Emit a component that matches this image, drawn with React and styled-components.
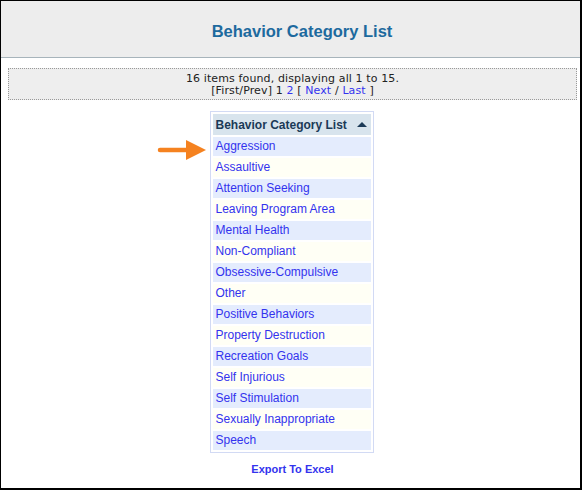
import React from 'react'
import styled, { createGlobalStyle } from 'styled-components'

const categories = [
  'Aggression',
  'Assaultive',
  'Attention Seeking',
  'Leaving Program Area',
  'Mental Health',
  'Non-Compliant',
  'Obsessive-Compulsive',
  'Other',
  'Positive Behaviors',
  'Property Destruction',
  'Recreation Goals',
  'Self Injurious',
  'Self Stimulation',
  'Sexually Inappropriate',
  'Speech',
]

const Global = createGlobalStyle`
  html, body { margin: 0; padding: 0; background: #fff; }
  body { font-family: "Liberation Sans", Arial, sans-serif; }
`

const Frame = styled.div`
  width: 582px;
  height: 490px;
  box-sizing: border-box;
  border-style: solid;
  border-color: #000;
  border-width: 1px 2px 2px 1px;
  display: flex;
  flex-direction: column;
  background: #fff;
`

const Header = styled.div`
  height: 57px;
  box-sizing: border-box;
  background: #ededed;
  border-bottom: 1px solid #a7b4bb;
  display: flex;
  align-items: center;
  justify-content: center;
  padding: 4px 0 0 23px;
`

const Title = styled.h1`
  margin: 0;
  font-family: "Liberation Sans", Arial, sans-serif;
  font-size: 16.5px;
  font-weight: bold;
  line-height: 20px;
  color: #1d6a9e;
`

const Content = styled.div`
  padding: 10px 3px 0 7px;
  display: flex;
  flex-direction: column;
  align-items: center;
`

const Pager = styled.div`
  align-self: stretch;
  background: #eeeeee;
  border: 1px dotted #999;
  padding: 4px 0 2px;
  text-align: center;
  font-family: "DejaVu Sans", Verdana, sans-serif;
  font-size: 11px;
  letter-spacing: 0.12px;
  line-height: 12px;
  color: #222;
`

const PageLink = styled.a`
  color: #3333ee;
  text-decoration: none;
`

const ListWrap = styled.div`
  position: relative;
  margin: 11px 2px 0 0;
`

const Arrow = styled.svg`
  position: absolute;
  left: -53px;
  top: 29px;
`

const Table = styled.table`
  width: 164px;
  border: 1px solid #d2daf4;
  border-spacing: 2px;
  border-collapse: separate;
  font-family: "Liberation Sans", Arial, sans-serif;
  font-size: 12px;
`

const HeadCell = styled.th`
  height: 21px;
  padding: 0 3px;
  background: #d8e4ed;
  color: #1b3a57;
  font-weight: bold;
  text-align: left;
  white-space: nowrap;
`

const HeadInner = styled.div`
  display: flex;
  align-items: center;
  justify-content: space-between;
`

const SortUp = styled.span`
  width: 0;
  height: 0;
  margin-right: 1px;
  border-left: 5px solid transparent;
  border-right: 5px solid transparent;
  border-bottom: 5px solid #1b3a57;
`

const Cell = styled.td`
  height: 19px;
  padding: 0 3px;
  line-height: 19px;
  background: ${(p) => (p.$alt ? '#fffff5' : '#e4ecfd')};
  white-space: nowrap;
`

const ItemLink = styled.a`
  color: #3333ee;
  text-decoration: none;
`

const Export = styled.a`
  margin-top: 10px;
  font-family: "Liberation Sans", Arial, sans-serif;
  font-size: 11px;
  font-weight: bold;
  line-height: 13px;
  color: #3333ee;
  text-decoration: none;
`

export default function App() {
  return (
    <>
      <Global />
      <Frame>
        <Header>
          <Title>Behavior Category List</Title>
        </Header>
        <Content>
          <Pager>
            <div>16 items found, displaying all 1 to 15.</div>
            <div>
              [First/Prev] 1 <PageLink href="#">2</PageLink> [ <PageLink href="#">Next</PageLink> /{' '}
              <PageLink href="#">Last</PageLink> ]
            </div>
          </Pager>
          <ListWrap>
            <Arrow width="50" height="22" viewBox="0 0 50 22">
              <line x1="3" y1="10" x2="31" y2="10" stroke="#f58220" strokeWidth="4.5" strokeLinecap="round" />
              <polygon points="29,0 49,10 29,20" fill="#f58220" />
            </Arrow>
            <Table>
              <thead>
                <tr>
                  <HeadCell>
                    <HeadInner>
                      Behavior Category List
                      <SortUp />
                    </HeadInner>
                  </HeadCell>
                </tr>
              </thead>
              <tbody>
                {categories.map((c, i) => (
                  <tr key={c}>
                    <Cell $alt={i % 2 === 1}>
                      <ItemLink href="#">{c}</ItemLink>
                    </Cell>
                  </tr>
                ))}
              </tbody>
            </Table>
          </ListWrap>
          <Export href="#">Export To Excel</Export>
        </Content>
      </Frame>
    </>
  )
}
